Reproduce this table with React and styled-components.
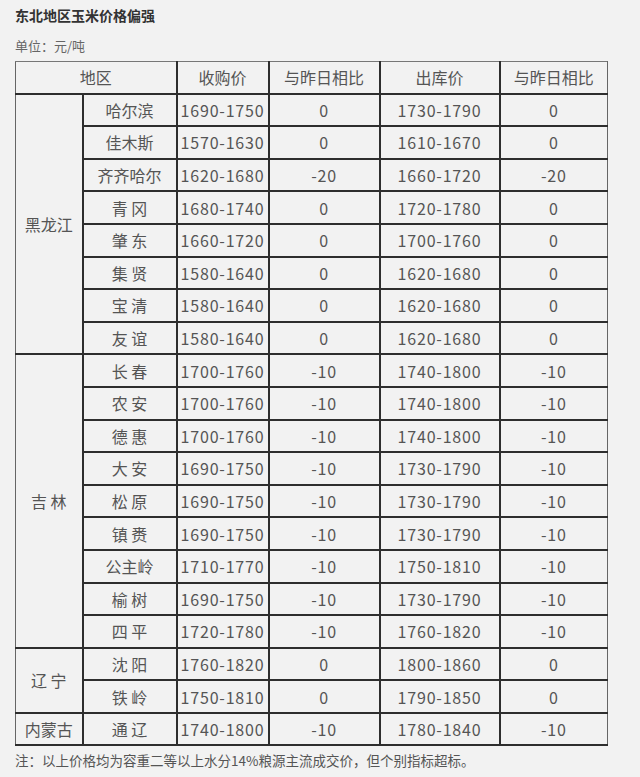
import React from "react";
import styled, { createGlobalStyle } from "styled-components";

const Global = createGlobalStyle`
  html, body { margin: 0; padding: 0; background: #f2f2f2; }
  body { font-family: "Noto Sans CJK SC", "Noto Sans", sans-serif; }
`;

const Page = styled.div`
  width: 640px;
  height: 777px;
  box-sizing: border-box;
  padding: 5px 15px 0 15px;
  background: #f2f2f2;
  overflow: hidden;
`;

const Title = styled.div`
  font-size: 14px;
  font-weight: 700;
  color: #333;
  line-height: 20px;
`;

const Unit = styled.div`
  font-size: 13px;
  color: #666;
  line-height: 20px;
  margin-top: 11px;
`;

const Table = styled.table`
  margin-top: 5px;
  width: 592px;
  border-collapse: collapse;
  table-layout: fixed;
  color: #555;
  font-size: 16px;
`;

const Cell = styled.td`
  border: 2px solid #2e2e2e;
  text-align: center;
  vertical-align: middle;
  padding: 0;
  height: 30.6px;
  line-height: 20px;
  white-space: pre;
  font-weight: 400;
  letter-spacing: ${(p) => (p.$num ? "0.8px" : "0")};
  ${(p) => (p.$left ? "border-left: 1px solid #666;" : "")}
  &:last-child {
    border-right: 1px solid #666;
  }
`;

const HeadCell = styled(Cell).attrs({ as: "th" })`
  border-top: 1px solid #777;
`;

const Note = styled.div`
  font-size: 13.5px;
  color: #555;
  line-height: 20px;
  margin-top: 4px;
`;

const widths = [67, 94, 92, 111, 120, 108];

const groups = [
  {
    name: "黑龙江",
    rows: [
      ["哈尔滨", "1690-1750", "0", "1730-1790", "0"],
      ["佳木斯", "1570-1630", "0", "1610-1670", "0"],
      ["齐齐哈尔", "1620-1680", "-20", "1660-1720", "-20"],
      ["青 冈", "1680-1740", "0", "1720-1780", "0"],
      ["肇 东", "1660-1720", "0", "1700-1760", "0"],
      ["集 贤", "1580-1640", "0", "1620-1680", "0"],
      ["宝 清", "1580-1640", "0", "1620-1680", "0"],
      ["友 谊", "1580-1640", "0", "1620-1680", "0"],
    ],
  },
  {
    name: "吉 林",
    rows: [
      ["长 春", "1700-1760", "-10", "1740-1800", "-10"],
      ["农 安", "1700-1760", "-10", "1740-1800", "-10"],
      ["德 惠", "1700-1760", "-10", "1740-1800", "-10"],
      ["大 安", "1690-1750", "-10", "1730-1790", "-10"],
      ["松 原", "1690-1750", "-10", "1730-1790", "-10"],
      ["镇 赉", "1690-1750", "-10", "1730-1790", "-10"],
      ["公主岭", "1710-1770", "-10", "1750-1810", "-10"],
      ["榆 树", "1690-1750", "-10", "1730-1790", "-10"],
      ["四 平", "1720-1780", "-10", "1760-1820", "-10"],
    ],
  },
  {
    name: "辽 宁",
    rows: [
      ["沈 阳", "1760-1820", "0", "1800-1860", "0"],
      ["铁 岭", "1750-1810", "0", "1790-1850", "0"],
    ],
  },
  {
    name: "内蒙古",
    rows: [["通 辽", "1740-1800", "-10", "1780-1840", "-10"]],
  },
];

export default function App() {
  return (
    <Page>
      <Global />
      <Title>东北地区玉米价格偏强</Title>
      <Unit>单位：元/吨</Unit>
      <Table>
        <colgroup>
          {widths.map((w, i) => (
            <col key={i} style={{ width: w }} />
          ))}
        </colgroup>
        <thead>
          <tr>
            <HeadCell colSpan={2} $left>地区</HeadCell>
            <HeadCell>收购价</HeadCell>
            <HeadCell>与昨日相比</HeadCell>
            <HeadCell>出库价</HeadCell>
            <HeadCell>与昨日相比</HeadCell>
          </tr>
        </thead>
        <tbody>
          {groups.map((g) =>
            g.rows.map((r, i) => (
              <tr key={g.name + i}>
                {i === 0 && (
                  <Cell rowSpan={g.rows.length} $left>
                    {g.name}
                  </Cell>
                )}
                {r.map((v, j) => (
                  <Cell key={j} $num={j > 0}>
                    {v}
                  </Cell>
                ))}
              </tr>
            ))
          )}
        </tbody>
      </Table>
      <Note>注：以上价格均为容重二等以上水分14%粮源主流成交价，但个别指标超标。</Note>
    </Page>
  );
}
